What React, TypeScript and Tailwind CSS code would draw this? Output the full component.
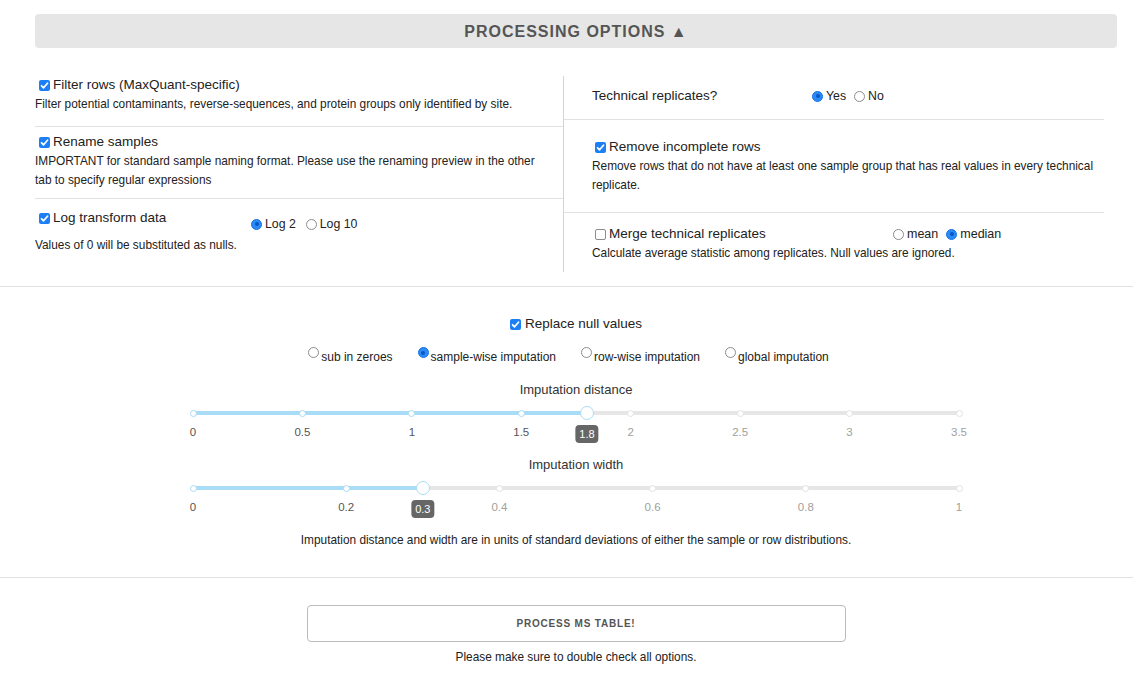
import React from "react";

// Little native-looking form controls (mac style)
const Check = ({ checked }: { checked: boolean }) =>
  checked ? (
    <span className="inline-flex w-[11px] h-[11px] shrink-0 items-center justify-center rounded-[2px] bg-[#1d7ff5]">
      <svg viewBox="0 0 12 12" className="w-[11px] h-[11px]">
        <path d="M2.8 6.3 L5 8.5 L9.3 3.5" fill="none" stroke="#fff" strokeWidth="1.9" strokeLinecap="round" strokeLinejoin="round" />
      </svg>
    </span>
  ) : (
    <span className="inline-block w-[11px] h-[11px] shrink-0 rounded-[2px] border border-[#8c8c8c] bg-white" />
  );

const Radio = ({ checked }: { checked: boolean }) =>
  checked ? (
    <span className="inline-flex w-[11px] h-[11px] shrink-0 items-center justify-center rounded-full bg-[#2a8bf6] border border-[#1a74e0]">
      <span className="w-[4px] h-[4px] rounded-full bg-[#0a55c7]" />
    </span>
  ) : (
    <span className="inline-block w-[11px] h-[11px] shrink-0 rounded-full border border-[#8c8c8c] bg-white" />
  );

const RadioItem = ({ label, checked, className = "" }: { label: string; checked?: boolean; className?: string }) => (
  <span className={"inline-flex items-center gap-[3px] " + className}>
    <Radio checked={!!checked} />
    <span>{label}</span>
  </span>
);

type SliderProps = { min: number; max: number; marks: number[]; value: number };

const Slider = ({ min, max, marks, value }: SliderProps) => {
  const pct = (v: number) => ((v - min) / (max - min)) * 100;
  return (
    <div className="relative h-[57px] w-[766px] mx-auto">
      <div className="absolute left-0 right-0 top-[12px] h-[4px] rounded-full bg-[#e6e6e6]" />
      <div className="absolute left-0 top-[12px] h-[4px] rounded-full bg-[#a9dcf6]" style={{ width: pct(value) + "%" }} />
      {marks.map((m) => (
        <React.Fragment key={m}>
          <span
            className={
              "absolute top-[10.5px] -ml-[3.5px] w-[7px] h-[7px] rounded-full bg-white border " +
              (m <= value ? "border-[#a9dcf6]" : "border-[#e2e2e2]")
            }
            style={{ left: pct(m) + "%" }}
          />
          <span
            className={"absolute top-[26px] -translate-x-1/2 text-[11.5px] leading-[14px] " + (m <= value ? "text-[#555]" : "text-[#a0a0a0]")}
            style={{ left: pct(m) + "%" }}
          >
            {m}
          </span>
        </React.Fragment>
      ))}
      <span
        className="absolute top-[7px] -ml-[7px] w-[14px] h-[14px] rounded-full bg-white border border-[#a9dcf6]"
        style={{ left: pct(value) + "%" }}
      />
      <span
        className="absolute top-[26px] -translate-x-1/2 h-[18px] min-w-[22px] px-[4px] rounded-[4px] bg-[#666] text-white text-[11px] leading-[18px] text-center"
        style={{ left: pct(value) + "%" }}
      >
        {value}
      </span>
    </div>
  );
};

export default function App() {
  return (
    <div className="min-h-[674px] w-full bg-white text-[#222] font-['Liberation_Sans',Arial,sans-serif]">
      <div className="pt-[14px] pl-[35px] pr-[16px]">
        {/* Header */}
        <div className="h-[34px] pt-[2px] rounded-[4px] bg-[#e6e6e6] flex items-center justify-center text-[16px] font-bold tracking-[1px] text-[#555]">
          PROCESSING OPTIONS ▲
        </div>

        {/* Two columns */}
        <div className="mt-[28px] grid grid-cols-[528px_1fr]">
          <div className="pb-[17px]">
            <div className="pb-[12px] border-b border-[#e1e1e1]">
              <div className="h-[18px] flex items-center text-[13.5px]">
                <span className="ml-[4px] mr-[3px] flex"><Check checked /></span>
                Filter rows (MaxQuant-specific)
              </div>
              <p className="mt-[1px] text-[11.85px] leading-[19px]">
                Filter potential contaminants, reverse-sequences, and protein groups only identified by site.
              </p>
            </div>
            <div className="pt-[6px] pb-[8px] border-b border-[#e1e1e1]">
              <div className="h-[18px] flex items-center text-[13.5px]">
                <span className="ml-[4px] mr-[3px] flex"><Check checked /></span>
                Rename samples
              </div>
              <p className="mt-[1px] text-[11.85px] leading-[19px] pr-[18px]">
                IMPORTANT for standard sample naming format. Please use the renaming preview in the other tab to specify regular expressions
              </p>
            </div>
            <div className="pt-[10px]">
              <div className="flex items-start text-[13.5px]">
                <div className="w-[216px] h-[18px] flex items-center">
                  <span className="ml-[4px] mr-[3px] flex"><Check checked /></span>
                  Log transform data
                </div>
                <div className="mt-[6px] h-[18px] flex items-center text-[12.3px]">
                  <RadioItem label="Log 2" checked />
                  <RadioItem label="Log 10" className="ml-[10px]" />
                </div>
              </div>
              <p className="mt-[3px] text-[11.85px] leading-[19px]">Values of 0 will be substituted as nulls.</p>
            </div>
          </div>

          <div className="border-l border-[#d4d4d4] pr-[13px]">
            <div className="pt-[11px] pb-[14px] pl-[28px] border-b border-[#e1e1e1]">
              <div className="h-[18px] flex items-center text-[13.5px]">
                <span className="w-[220px]">Technical replicates?</span>
                <span className="flex items-center text-[12.3px]">
                  <RadioItem label="Yes" checked />
                  <RadioItem label="No" className="ml-[8px]" />
                </span>
              </div>
            </div>
            <div className="pt-[18px] pb-[17px] pl-[28px] border-b border-[#e1e1e1]">
              <div className="h-[18px] flex items-center text-[13.5px]">
                <span className="ml-[3px] mr-[3px] flex"><Check checked /></span>
                Remove incomplete rows
              </div>
              <p className="mt-[1px] text-[11.85px] leading-[19px] pr-[10px]">
                Remove rows that do not have at least one sample group that has real values in every technical replicate.
              </p>
            </div>
            <div className="pt-[12px] pl-[28px]">
              <div className="h-[18px] flex items-center text-[13.5px]">
                <div className="w-[301px] flex items-center">
                  <span className="ml-[3px] mr-[3px] flex"><Check checked={false} /></span>
                  Merge technical replicates
                </div>
                <span className="flex items-center text-[12.5px]">
                  <RadioItem label="mean" />
                  <RadioItem label="median" checked className="ml-[8px]" />
                </span>
              </div>
              <p className="mt-[1px] text-[11.85px] leading-[19px]">
                Calculate average statistic among replicates. Null values are ignored.
              </p>
            </div>
          </div>
        </div>
      </div>

      <div className="mt-[14px] border-t border-[#e1e1e1]" />

      {/* Null replacement + sliders */}
      <div className="pt-[28px] pb-[29px] pl-[35px] pr-[16px]">
        <div className="h-[18px] flex items-center justify-center text-[13.5px]">
          <span className="mr-[4px] flex"><Check checked /></span>
          Replace null values
        </div>
        <div className="mt-[14px] h-[18px] flex items-center justify-center gap-[25px] pr-[15px] text-[12px]">
          {[
            { label: "sub in zeroes", checked: false },
            { label: "sample-wise imputation", checked: true },
            { label: "row-wise imputation", checked: false },
            { label: "global imputation", checked: false },
          ].map((r) => (
            <span key={r.label} className="flex items-start gap-[2px]">
              <span className="mt-[1px] flex"><Radio checked={r.checked} /></span>
              <span className="leading-[18px] mt-[2px]">{r.label}</span>
            </span>
          ))}
        </div>

        <div className="mt-[16px] h-[18px] leading-[18px] text-center text-[13px] text-[#333]">Imputation distance</div>
        <Slider min={0} max={3.5} marks={[0, 0.5, 1, 1.5, 2, 2.5, 3, 3.5]} value={1.8} />

        <div className="h-[18px] leading-[18px] text-center text-[13px] text-[#333]">Imputation width</div>
        <Slider min={0} max={1} marks={[0, 0.2, 0.4, 0.6, 0.8, 1]} value={0.3} />

        <p className="mt-[2px] text-center text-[11.85px] leading-[15px]">
          Imputation distance and width are in units of standard deviations of either the sample or row distributions.
        </p>
      </div>

      <div className="border-t border-[#e1e1e1]" />

      <div className="pt-[27px] pb-[10px] pl-[35px] pr-[16px]">
        <button className="block mx-auto w-[539px] h-[37px] rounded-[4px] border border-[#bbb] bg-white text-[10px] font-bold tracking-[0.8px] text-[#555]">
          PROCESS MS TABLE!
        </button>
        <p className="mt-[8px] text-center text-[11.85px] leading-[15px]">Please make sure to double check all options.</p>
      </div>
    </div>
  );
}
